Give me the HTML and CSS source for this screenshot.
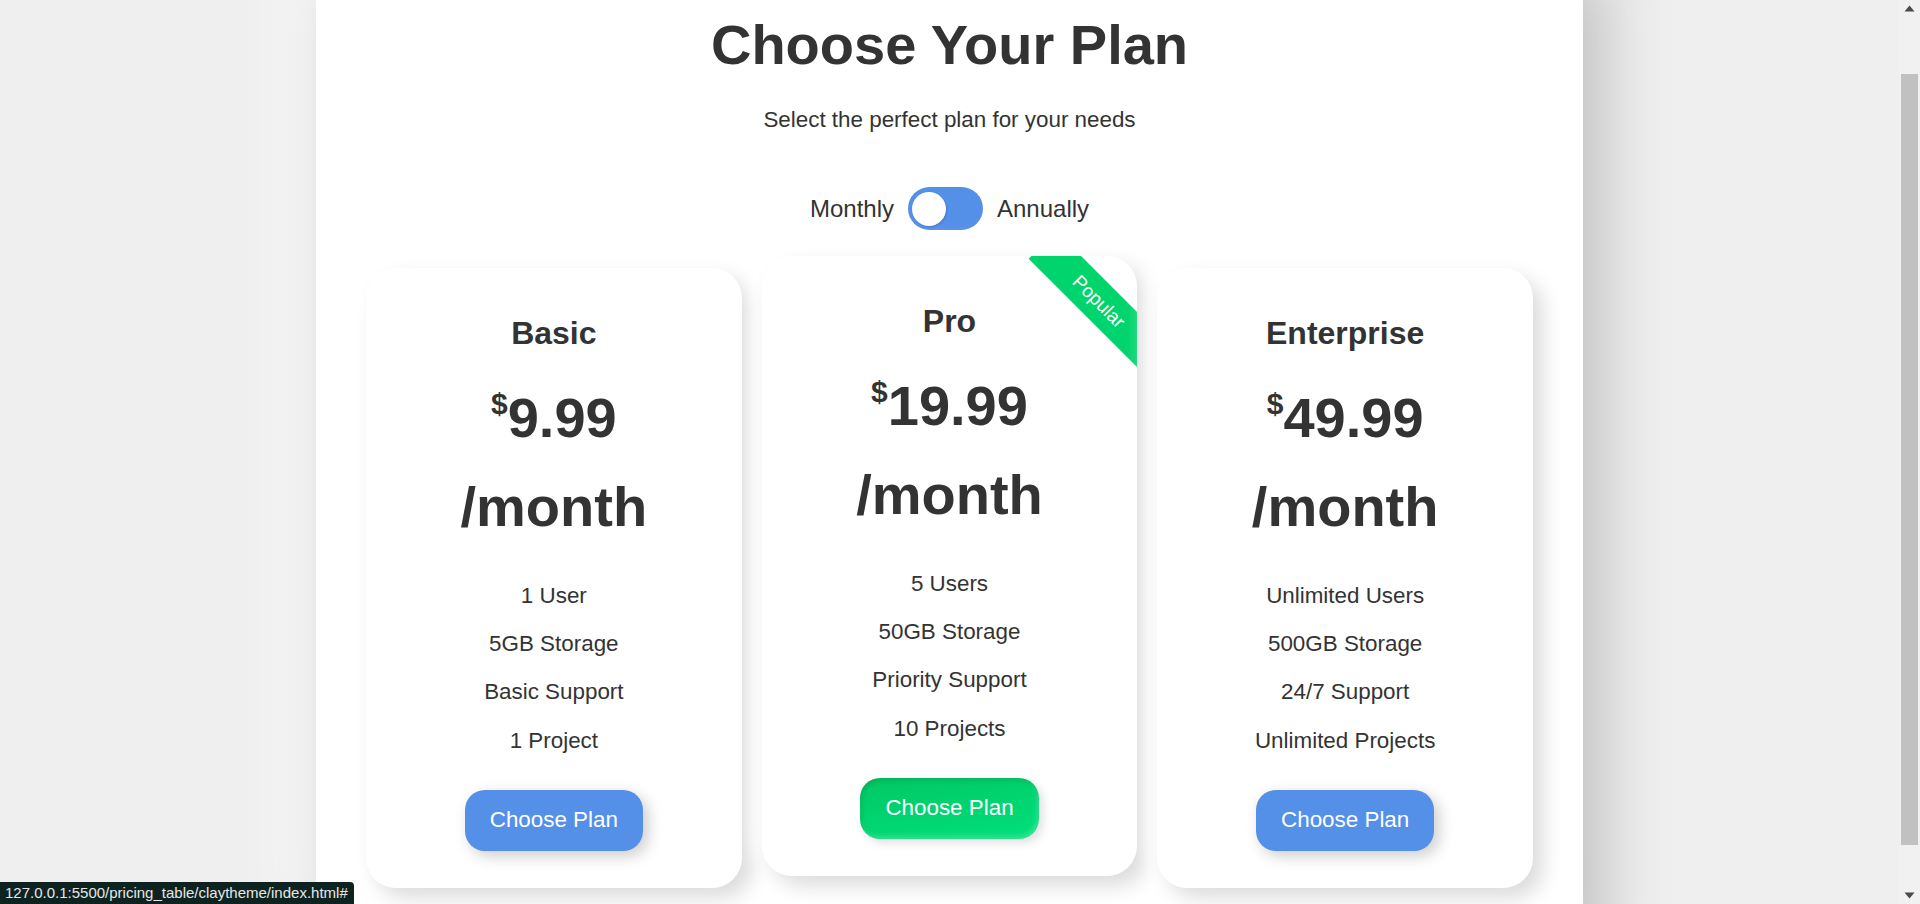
FILE: index.html
```html
<!DOCTYPE html>
<html lang="en">
<head>
<meta charset="UTF-8">
<title>Pricing Plans</title>
<link rel="stylesheet" href="styles.css">
</head>
<body>
<div class="container">
  <h1 class="title">Choose Your Plan</h1>
  <p class="subtitle">Select the perfect plan for your needs</p>
  <div class="toggle-row">
    <span>Monthly</span>
    <span class="switch"><span class="knob"></span></span>
    <span>Annually</span>
  </div>
  <div class="plans">
    <div class="card">
      <h3 class="plan-name">Basic</h3>
      <div class="price"><span class="currency">$</span>9.99 <span class="period">/month</span></div>
      <ul class="features">
        <li>1 User</li>
        <li>5GB Storage</li>
        <li>Basic Support</li>
        <li>1 Project</li>
      </ul>
      <button class="btn">Choose Plan</button>
    </div>
    <div class="card featured">
      <div class="badge">Popular</div>
      <h3 class="plan-name">Pro</h3>
      <div class="price"><span class="currency">$</span>19.99 <span class="period">/month</span></div>
      <ul class="features">
        <li>5 Users</li>
        <li>50GB Storage</li>
        <li>Priority Support</li>
        <li>10 Projects</li>
      </ul>
      <button class="btn btn-green">Choose Plan</button>
    </div>
    <div class="card">
      <h3 class="plan-name">Enterprise</h3>
      <div class="price"><span class="currency">$</span>49.99 <span class="period">/month</span></div>
      <ul class="features">
        <li>Unlimited Users</li>
        <li>500GB Storage</li>
        <li>24/7 Support</li>
        <li>Unlimited Projects</li>
      </ul>
      <button class="btn">Choose Plan</button>
    </div>
  </div>
</div>
<div class="status">127.0.0.1:5500/pricing_table/claytheme/index.html#</div>
<div class="scrollbar" aria-hidden="true">
  <svg class="arrow" width="21" height="17" viewBox="0 0 21 17"><polygon points="5.5,11.5 15.5,11.5 10.5,5.5" fill="#4a4a4a"/></svg>
  <div class="track"><div class="thumb"></div></div>
  <svg class="arrow" width="21" height="17" viewBox="0 0 21 17"><polygon points="5.5,5.5 15.5,5.5 10.5,11.5" fill="#4a4a4a"/></svg>
</div>
<script src="script.js"></script>
</body>
</html>
```

FILE: styles.css
```css
* {
  box-sizing: border-box;
}

html,
body {
  margin: 0;
}

body {
  background: #efefef;
  font-family: "Liberation Sans", Arial, sans-serif;
  color: #333;
  line-height: 1.6;
  padding: 20px 21px 20px 0;
}

.container {
  width: 1267px;
  margin: 0 auto;
  background: #ffffff;
  padding: 50px;
  text-align: center;
  box-shadow: 20px 20px 60px #bebebe, -20px -20px 60px #ffffff;
}

.title {
  font-size: 56px;
  font-weight: 700;
  margin: 0 0 12px;
}

.subtitle {
  font-size: 22.4px;
  margin: 0;
}

.toggle-row {
  display: flex;
  justify-content: center;
  align-items: center;
  gap: 14px;
  margin-top: 50px;
  font-size: 24px;
}

.switch {
  display: flex;
  align-items: center;
  width: 75px;
  height: 43px;
  padding: 0 4px;
  border-radius: 22px;
  background: #548fe8;
}

.knob {
  width: 34px;
  height: 34px;
  border-radius: 50%;
  background: #ffffff;
  box-shadow: 1px 1px 2px rgba(0, 0, 0, 0.15);
}

.plans {
  display: grid;
  grid-template-columns: repeat(3, 1fr);
  gap: 20px;
  margin-top: 38px;
}

.card {
  position: relative;
  overflow: hidden;
  background: #ffffff;
  border-radius: 30px;
  padding: 40px 40px 37px;
  box-shadow: 10px 10px 20px rgba(0, 0, 0, 0.14), -10px -10px 20px rgba(255, 255, 255, 0.9);
}

.card.featured {
  transform: translateY(-12px);
}

.badge {
  position: absolute;
  top: 26px;
  right: -42px;
  width: 160px;
  height: 39px;
  line-height: 39px;
  font-size: 19px;
  color: #ffffff;
  background: #00d46c;
  text-align: center;
  transform: rotate(45deg);
}

.plan-name {
  font-size: 32px;
  font-weight: 700;
  margin: 0 0 13px;
}

.price {
  font-size: 56px;
  font-weight: 700;
  margin: 0 0 19.5px;
}

.currency {
  font-size: 30px;
  vertical-align: 23px;
}

.features {
  list-style: none;
  margin: 0 0 25px;
  padding: 0;
  font-size: 22.4px;
}

.features li {
  padding: 6.3px 0;
}

.btn {
  display: block;
  width: fit-content;
  margin: 0 auto;
  font-family: inherit;
  font-size: 22.4px;
  line-height: 36px;
  padding: 12.35px 25px;
  border: none;
  border-radius: 20px;
  color: #ffffff;
  background: #548fe8;
  box-shadow: 5px 5px 15px rgba(0, 0, 0, 0.2);
  cursor: pointer;
}

.btn-green {
  background: linear-gradient(170deg, #00c864, #00e07c);
  box-shadow: inset 2px 3px 5px rgba(0, 0, 0, 0.1), inset -2px -3px 5px rgba(255, 255, 255, 0.2), 4px 4px 10px rgba(0, 0, 0, 0.12);
}

.status {
  position: fixed;
  left: 0;
  bottom: 0;
  height: 22px;
  padding: 0 6px 0 5px;
  font-size: 15px;
  line-height: 22px;
  color: #e4e8e6;
  background: #0e2320;
  border-top-right-radius: 4px;
}

.scrollbar {
  position: fixed;
  top: 0;
  right: 0;
  bottom: 0;
  width: 21px;
  display: flex;
  flex-direction: column;
  background: #f1f1f1;
}

.arrow {
  display: block;
  flex: none;
}

.track {
  flex: 1;
  padding: 57px 2px 42px;
  display: flex;
}

.thumb {
  flex: 1;
  background: #c1c1c1;
}
```

FILE: script.js
```js
window.scrollTo(0, 70);
```
